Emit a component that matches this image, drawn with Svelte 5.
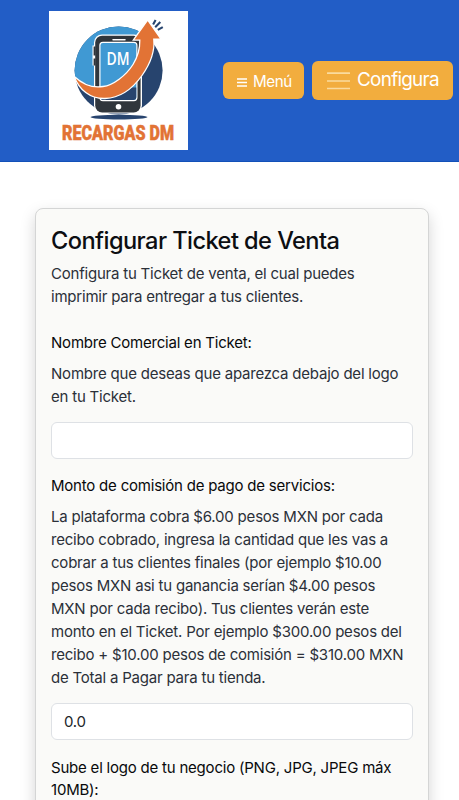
<script>
  const intro = ['Configura tu Ticket de venta, el cual puedes', 'imprimir para entregar a tus clientes.'];
  const nameHelp = ['Nombre que deseas que aparezca debajo del logo', 'en tu Ticket.'];
  const feeHelp = [
    'La plataforma cobra $6.00 pesos MXN por cada',
    'recibo cobrado, ingresa la cantidad que les vas a',
    'cobrar a tus clientes finales (por ejemplo $10.00',
    'pesos MXN asi tu ganancia serían $4.00 pesos',
    'MXN por cada recibo). Tus clientes verán este',
    'monto en el Ticket. Por ejemplo $300.00 pesos del',
    'recibo + $10.00 pesos de comisión = $310.00 MXN',
    'de Total a Pagar para tu tienda.'
  ];
  const logoLabel = ['Sube el logo de tu negocio (PNG, JPG, JPEG máx', '10MB):'];
  let name = $state('');
  let fee = $state('0.0');
</script>

{#snippet lines(list)}
  {#each list as line}<span class="line">{line}</span>{/each}
{/snippet}

<div class="page">
  <header>
    <svg class="logo" viewBox="49 11.5 139 139" width="139" height="139" role="img" aria-label="Recargas DM">
      <rect x="49" y="11.5" width="139" height="139" fill="#fff" />
      <defs>
        <clipPath id="disc"><circle cx="118.6" cy="71" r="44" /></clipPath>
      </defs>
      <g clip-path="url(#disc)">
        <rect x="74" y="26" width="90" height="90" fill="#27446e" />
        <path d="M74 26H136L151 45Q145 80 118 88Q96 92 74 78Z" fill="#4099d3" />
      </g>
      <rect x="94" y="35" width="48" height="79" rx="8" fill="#fff" />
      <path d="M94.5 46v20" stroke="#fff" stroke-width="4" />
      <rect x="95.2" y="36.3" width="45.4" height="76.7" rx="7" fill="#30363c" />
      <path d="M94.6 47v9M94.6 59v7" stroke="#30363c" stroke-width="2" />
      <rect x="99.9" y="42.8" width="37" height="58.3" rx="3" fill="#4099d3" stroke="#fff" stroke-width="1.2" />
      <path d="M100.5 88H136.3V97.5Q136.3 100.5 133 100.5H103.5Q100.5 100.5 100.5 97.5Z" fill="#27446e" />
      <path d="M113 40.2H125" stroke="#fff" stroke-width="1.5" stroke-linecap="round" />
      <circle cx="118.5" cy="107.2" r="2.8" fill="#fff" />
      <text x="106.6" y="65" textLength="23" lengthAdjust="spacingAndGlyphs" class="dm">DM</text>
      <path d="M74 76.7C84 86 94 88.5 103 87C113 86 126 76 133 65C138 57 140 49 139.8 40.6H133.3L147.6 20.5L161 39.6H153.8C155 52 149 66 142 76C132 90 119 98.5 105 99C90 99.5 79 90 74 76.7Z" fill="#e27335" stroke="#fff" stroke-width="1.3" />
      <path d="M153.1 25L155.6 20.4M155.2 27.7L160.3 22.6M157.8 30.4L162.8 27.6" stroke="#27446e" stroke-width="2.1" />
      <ellipse cx="119" cy="117.6" rx="28.5" ry="2.4" fill="#27446e" />
      <text x="62" y="140.4" textLength="112" lengthAdjust="spacingAndGlyphs" class="brand">RECARGAS DM</text>
    </svg>
    <button class="menu">
      <svg width="10" height="9" viewBox="0 0 10 9"><path d="M0 1H10M0 4.5H10M0 8H10" stroke="#fff" stroke-width="1.5" /></svg>
      <span>Menú</span>
    </button>
    <button class="config">
      <svg width="23" height="18" viewBox="0 0 23 18"><path d="M.5 1.2H22.5M.5 9H22.5M.5 16.5H22.5" stroke="#fadb9e" stroke-width="1.7" stroke-linecap="round" /></svg>
      <span>Configura</span>
    </button>
  </header>

  <main>
    <h1>Configurar Ticket de Venta</h1>
    <p class="intro">{@render lines(intro)}</p>
    <label for="name">Nombre Comercial en Ticket:</label>
    <p>{@render lines(nameHelp)}</p>
    <input id="name" bind:value={name} />
    <label for="fee">Monto de comisión de pago de servicios:</label>
    <p>{@render lines(feeHelp)}</p>
    <input id="fee" bind:value={fee} />
    <label for="name">{@render lines(logoLabel)}</label>
  </main>
</div>

<style>
  :global(body) { margin: 0; background: #fff; }
  .page {
    height: 800px;
    overflow: hidden;
    font: 15px/22.95px Inter, sans-serif;
    letter-spacing: -0.21px;
    color: #2b3039;
  }
  header {
    height: 162px;
    box-sizing: border-box;
    padding: 0 6px 0 49px;
    background: #225dc6;
    border-bottom: 1px solid #1250b8;
    display: flex;
    align-items: center;
  }
  .logo { display: block; flex: none; overflow: visible; }
  .dm { font: 600 18.5px "Open Sans", sans-serif; fill: #fff; letter-spacing: 0; }
  .brand { font: 900 20px "Roboto", sans-serif; fill: #e27335; stroke: #e27335; stroke-width: 0.5; letter-spacing: 0; }
  button {
    display: flex;
    align-items: center;
    box-sizing: border-box;
    border: 0;
    padding: 0;
    border-radius: 6px;
    background: #f2ad3e;
    color: #fff;
    font-family: inherit;
    flex: none;
  }
  .menu { width: 81px; height: 37px; margin-left: 35px; padding-left: 14px; gap: 6px; font-size: 15.2px; letter-spacing: -0.4px; }
  .menu svg { margin-top: 3px; }
  .menu span { margin-top: 1px; }
  .config { width: 141px; height: 39px; margin-left: 8px; padding-left: 15px; gap: 7px; font-size: 18.9px; letter-spacing: -0.72px; }
  .config span { margin-top: -2px; }
  main {
    box-sizing: border-box;
    width: 394px;
    height: 640px;
    margin: 46px 0 0 35px;
    padding: 17px 15px 0;
    background: #fafaf8;
    border: 1px solid #d4d5d5;
    border-radius: 8px;
    box-shadow: 0 6px 15px rgba(0, 0, 0, 0.17);
  }
  h1 { margin: 0 0 8.2px; font-size: 23.6px; line-height: 29px; font-weight: 500; letter-spacing: -0.56px; color: #0c0e12; white-space: nowrap; }
  p { margin: 0 0 13.3px; }
  .intro { margin-bottom: 23px; }
  .line { display: block; white-space: nowrap; }
  label { display: block; margin-bottom: 7.7px; color: #08090b; }
  input {
    display: block;
    box-sizing: border-box;
    width: 362px;
    height: 37px;
    margin: 0 0 16.5px;
    padding: 0 12px;
    border: 1px solid #dee1e5;
    border-radius: 6px;
    background: #fff;
    color: #212529;
    font: inherit;
    letter-spacing: inherit;
    outline: 0;
  }
</style>
